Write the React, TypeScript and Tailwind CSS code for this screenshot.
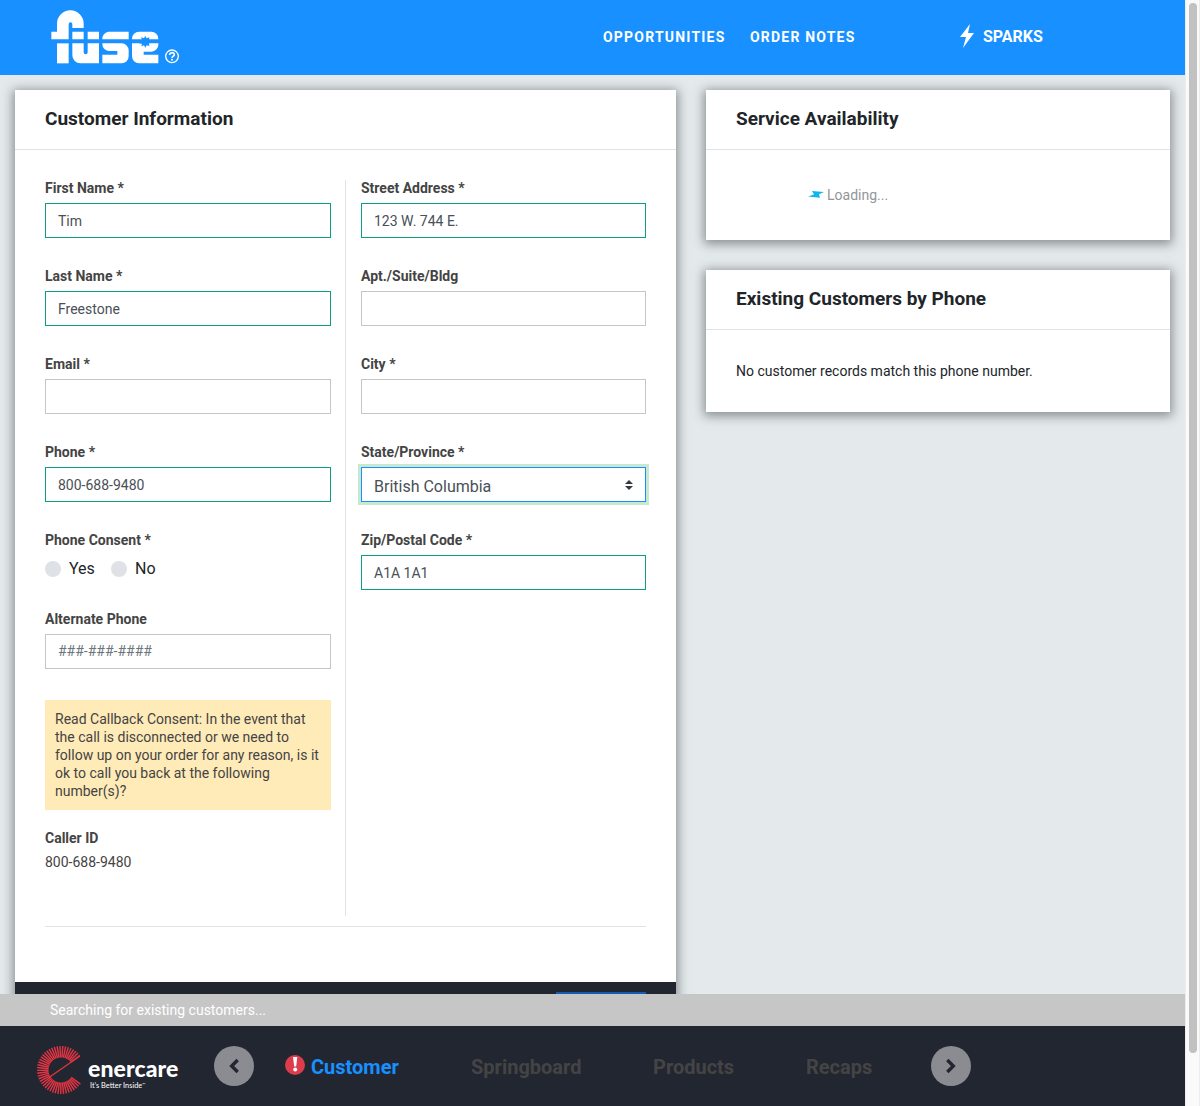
import React from "react";

const SHADOW = "shadow-[0_2px_10px_2px_rgba(60,70,65,0.55)]";

function FuseLogo() {
  return (
    <svg width="130" height="56" viewBox="60 24 390 168" fill="#fff" className="block">
      <path d="M64 95H81V71A40 40 0 0 1 161 71V84H127V72A5.500 5.500 0 0 0 116 72V118H64Z" />
      <path d="M81 130H116V190H81Z" />
      <path d="M127 95H161V118H127ZM173 95H207V118H173Z" />
      <path d="M127 130H161V157A6 6 0 0 0 173 157V130H207V190H151A24 24 0 0 1 127 166Z" />
      <path d="M236 95H296V118H217A22 22 0 0 1 236 95Z" />
      <path d="M217 130H275A21 21 0 0 1 296 151V169A21 21 0 0 1 275 190H217V164H262V153H238A21 21 0 0 1 217 132Z" />
      <path d="M327 95H364A21 21 0 0 1 385 116V118H306V116A21 21 0 0 1 327 95Z" />
      <path d="M306 130H385V134A21 21 0 0 1 364 155H341V164H385V190H327A21 21 0 0 1 306 169Z" />
      <path
        fill="#1890ff"
        d="M346 108L350 115L358 112L357 120L368 125L357 130L358 138L350 136L346 143L342 136L334 139L336 131L327 130V120L336 120L333 112L342 115Z"
      />
      <circle cx="426" cy="169" r="19" fill="none" stroke="#fff" strokeWidth="4" />
      <path d="M419 165C419 156 433 156 433 164C433 169 426 168 426 174" fill="none" stroke="#fff" strokeWidth="5" />
      <circle cx="426" cy="179.500" r="3" />
    </svg>
  );
}

function EnercareMark() {
  const rays: React.ReactNode[] = [];
  for (let i = 0; i <= 42; i++) {
    const a = ((36 + (i * 286) / 42) * Math.PI) / 180;
    rays.push(
      <line
        key={i}
        x1={25 + 12.5 * Math.cos(a)}
        y1={25 + 12.5 * Math.sin(a)}
        x2={25 + 24 * Math.cos(a)}
        y2={25 + 24 * Math.sin(a)}
      />
    );
  }
  return (
    <svg width="50" height="50" viewBox="0 0 50 50" stroke="#e83442" strokeWidth="1.4" className="block shrink-0">
      {rays}
      <line x1="13.300" y1="32.300" x2="44" y2="11" strokeWidth="1.2" />
    </svg>
  );
}

type Tone = "valid" | "plain" | "focus";

function Field({ label, value, tone = "plain", placeholder }: { label: string; value?: string; tone?: Tone; placeholder?: string }) {
  const border =
    tone === "valid"
      ? "border-[#0b9e80]"
      : tone === "focus"
        ? "border-[#1890ff] shadow-[0_0_0_3px_#c8e8d0]"
        : "border-[#c4c5c6]";
  return (
    <div className="mb-[30px] h-[58px]">
      <div className="h-[23px] pt-px text-sm leading-[15px] font-bold text-[#444]">{label}</div>
      <div className={`flex h-[35px] items-center justify-between border bg-white pl-3 pr-[11px] ${border}`}>
        {tone === "focus" ? (
          <>
            <span className="pt-1 text-base leading-5 text-[#495057]">{value}</span>
            <svg width="10" height="12" viewBox="0 0 10 12" fill="#343a40">
              <path d="M5 1L9 5H1ZM5 11L1 7H9Z" />
            </svg>
          </>
        ) : (
          <span className={placeholder ? "pb-px text-sm text-[#6c757d]" : "pt-px text-sm text-[#495057]"}>{value ?? placeholder}</span>
        )}
      </div>
    </div>
  );
}

function CardTitle({ children }: { children: React.ReactNode }) {
  return (
    <div className="h-[60px] border-b border-[#e2e2ea] px-[30px] pt-[17px] text-[19px] leading-6 font-bold text-[#212529]">
      {children}
    </div>
  );
}

function Arrow({ left }: { left?: boolean }) {
  return (
    <div className="flex size-10 items-center justify-center rounded-full bg-[#8b8c91]">
      <svg width="16" height="18" viewBox="0 0 16 18" fill="none" stroke="#222631" strokeWidth="3.4">
        <path d={left ? "M11.700 3L5.700 9L11.700 15" : "M4.300 3L10.300 9L4.300 15"} />
      </svg>
    </div>
  );
}

export default function App() {
  return (
    <div className="flex h-[1106px] w-[1200px] overflow-hidden bg-[#fafafa] font-['Roboto',sans-serif]">
      <div className="flex w-[1185px] flex-col bg-[#e4e9ec]">
        <header className="flex h-[75px] shrink-0 bg-[#1890ff] text-white">
          <div className="w-[603px] pl-[50px] pt-2">
            <FuseLogo />
          </div>
          <nav className="flex pt-[27px] text-sm leading-5 font-bold tracking-[1.2px]">
            <span className="w-[147px]">OPPORTUNITIES</span>
            <span className="w-[208px]">ORDER NOTES</span>
          </nav>
          <div className="flex pt-6">
            <svg width="18" height="24" viewBox="0 0 18 24" fill="#fff">
              <path d="M12 0L2 13H8L5 24L16 9H10Z" />
            </svg>
            <span className="ml-[7px] text-base leading-[25px] font-bold">SPARKS</span>
          </div>
        </header>

        <main className="flex h-[919px] shrink-0 items-start gap-[30px] overflow-hidden pl-[15px] pt-[15px]">
          <section className={`h-[920px] w-[661px] bg-white ${SHADOW}`}>
            <CardTitle>Customer Information</CardTitle>
            <div className="mx-[30px] flex h-[777px] border-b border-[#e2e2ea] pt-[30px]">
              <div className="h-[736px] w-[301px] border-r border-[#e2e2ea] pr-[14px]">
                <Field label="First Name *" value="Tim" tone="valid" />
                <Field label="Last Name *" value="Freestone" tone="valid" />
                <Field label="Email *" />
                <Field label="Phone *" value="800-688-9480" tone="valid" />
                <div className="h-[79px]">
                  <div className="pt-px text-sm leading-[15px] font-bold text-[#444]">Phone Consent *</div>
                  <div className="mt-[3px] flex h-5 items-center text-base text-[#212529] [&>span]:translate-y-0 pt-[15px]">
                    <span className="mr-2 size-4 shrink-0 rounded-full bg-[#dee2e6]" />
                    <span className="w-[42px]">Yes</span>
                    <span className="mr-2 size-4 shrink-0 rounded-full bg-[#dee2e6]" />
                    <span>No</span>
                  </div>
                </div>
                <Field label="Alternate Phone" placeholder="###-###-####" />
                <div className="mt-[31px] h-[110px] bg-[#ffebb8] px-[10px] pt-[10px] text-sm leading-[18px] text-[#444]">
                  Read Callback Consent: In the event that<br />
                  the call is disconnected or we need to<br />
                  follow up on your order for any reason, is it<br />
                  ok to call you back at the following<br />
                  number(s)?
                </div>
                <div className="pt-[18px] text-sm leading-5 font-bold text-[#444]">Caller ID</div>
                <div className="pt-1 text-sm leading-5 text-[#444]">800-688-9480</div>
              </div>
              <div className="w-[300px] pl-[15px]">
                <Field label="Street Address *" value="123 W. 744 E." tone="valid" />
                <Field label="Apt./Suite/Bldg" />
                <Field label="City *" />
                <Field label="State/Province *" value="British Columbia" tone="focus" />
                <Field label="Zip/Postal Code *" value="A1A 1A1" tone="valid" />
              </div>
            </div>
            <div className="mt-[55px] flex h-[40px] justify-end bg-[#222631] pr-[30px] pt-[10px]">
              <div className="w-[90px] bg-[#155cb0]" />
            </div>
          </section>

          <aside className="flex w-[464px] flex-col gap-[30px]">
            <section className={`h-[150px] bg-white ${SHADOW}`}>
              <CardTitle>Service Availability</CardTitle>
              <div className="flex pl-[102px] pt-[35px] text-sm leading-5 text-[#939598]">
                <svg width="16" height="8" viewBox="0 0 16 8" fill="#10b5ec" className="mr-[3px] mt-[6px]">
                  <path d="M4 0L16 1L11 3.200L12 6.700L0 5.500L6 3.500Z" />
                </svg>
                Loading...
              </div>
            </section>
            <section className={`h-[142px] bg-white ${SHADOW}`}>
              <CardTitle>Existing Customers by Phone</CardTitle>
              <div className="pl-[30px] pt-[31px] text-sm leading-5 text-[#212529]">No customer records match this phone number.</div>
            </section>
          </aside>
        </main>

        <div className="h-8 shrink-0 bg-[#c6c6c6] pl-[50px] pt-[6px] text-sm leading-5 text-white">
          Searching for existing customers...
        </div>

        <footer className="flex h-20 shrink-0 bg-[#222631] pl-9 text-xl font-bold text-[#444]">
          <div className="flex w-[178px] pt-[19px] text-white">
            <EnercareMark />
            <div className="ml-0.5 pt-[11px]">
              <div className="font-['Lato',sans-serif] text-[23px] leading-6 font-black tracking-[0.1px]">enercare</div>
              <div className="ml-0.5 font-['Lato',sans-serif] text-[7.4px] leading-[9px] font-normal whitespace-nowrap">
                It’s Better Inside<span className="text-[4px] align-[2px]">™</span>
              </div>
            </div>
          </div>
          <div className="w-[71px] pt-5">
            <Arrow left />
          </div>
          <div className="w-[26px] pt-[29px]">
            <svg width="20" height="20" viewBox="0 0 20 20">
              <circle cx="10" cy="10" r="10" fill="#dc3c4c" />
              <path d="M8 2H12.300L11.200 11.500H9.200Z" fill="#fff" />
              <circle cx="10.200" cy="14.500" r="2" fill="#fff" />
            </svg>
          </div>
          <nav className="flex pt-[27px] leading-7">
            <span className="w-[160px] text-[#1890ff]">Customer</span>
            <span className="w-[182px]">Springboard</span>
            <span className="w-[153px]">Products</span>
            <span className="w-[125px]">Recaps</span>
          </nav>
          <div className="pt-5">
            <Arrow />
          </div>
        </footer>
      </div>
      <div className="h-full w-[15px] border-x border-[#ededed] pl-[3px] pt-[3px]">
        <div className="h-[1050px] w-2 rounded-full bg-[#c1c1c1]" />
      </div>
    </div>
  );
}
